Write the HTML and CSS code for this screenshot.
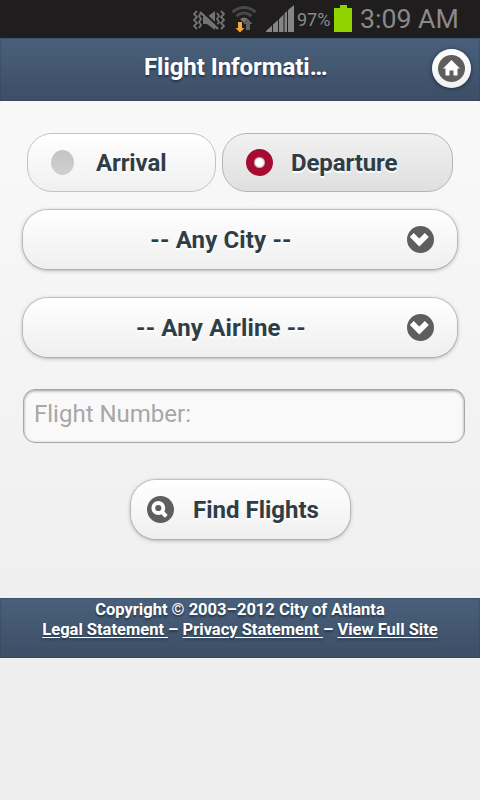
FILE: index.html
```html
<!DOCTYPE html>
<html lang="en">
<head>
<meta charset="utf-8">
<title>Flight Information</title>
<link rel="stylesheet" href="styles.css">
</head>
<body>
<div class="status">
  <svg class="mute" width="32" height="24" viewBox="0 0 32 24" fill="none" stroke="#737373" stroke-width="1.8">
    <path d="M4 2 1 5l3 3-3 3 3 3-3 3 3 3M8 4 6 7l2 3-2 3 2 3-2 3M28 2l3 3-3 3 3 3-3 3 3 3-3 3M24 4l2 3-2 3 2 3-2 3 2 3"/>
    <path d="M10 8h4l8-6v19l-8-6h-4z" fill="#737373" stroke="none"/>
    <path d="M8 1l19 18" stroke="#1f1d1e" stroke-width="2"/>
    <path d="M7 3l18 17" stroke-width="2.4"/>
  </svg>
  <svg class="wifi" width="26" height="28" viewBox="0 0 26 28" fill="none" stroke="#484848" stroke-width="3">
    <path d="M1.500 7q11.500-9 23 0M5.500 11q7.500-6 15 0"/>
    <path d="M9 14q4-3 8 0l-4 4z" fill="#737373" stroke="none"/>
    <path d="M7 17h4v6h2.500L9 27.500 4.500 23H7z" fill="#f5a33c" stroke="none"/>
    <path d="M15 25v-6h-2.500l4.500-5 4.500 5H19v6z" fill="#626262" stroke="none"/>
  </svg>
  <svg class="signal" width="28" height="27" viewBox="0 0 28 27" fill="#858585">
    <path d="M0 27v-1l6-5.500V27zM7 27v-7.500l5-4.500v12zM13 27V14l4.500-4.500V27zM18.500 27V8.500L21 6v21zM22 27V5l6-5v27z"/>
  </svg>
  <span class="percent">97%</span>
  <svg class="battery" width="18" height="27" viewBox="0 0 18 27" fill="#8fd400"><path d="M0 3h6V0h7v3h5v24H0z"/></svg>
  <span class="clock">3:09 AM</span>
</div>
<header class="bar header">
  <h1>Flight Informati…</h1>
  <a class="home" href="#" aria-label="Home">
    <svg width="27" height="27" viewBox="0 0 27 27"><circle cx="13.500" cy="13.500" r="13.500" fill="#5e5e5e"/><path d="M13.500 5 5 13.500h2.500v7h4v-5h4v5h4v-7H22z" fill="#fff"/></svg>
  </a>
</header>
<main>
  <div class="choices">
    <div class="choice arrival"><span class="dot"></span><span class="label">Arrival</span></div>
    <div class="choice departure"><span class="dot on"></span><span class="label">Departure</span></div>
  </div>
  <div class="button select city">
    <span class="label">-- Any City --</span>
    <svg width="27" height="27" viewBox="0 0 27 27"><circle cx="13.500" cy="13.500" r="13.500" fill="#5e5e5e"/><path d="M4.800 9 12.300 16.500 19.800 9" fill="none" stroke="#fff" stroke-width="5.500"/></svg>
  </div>
  <div class="button select airline">
    <span class="label">-- Any Airline --</span>
    <svg width="27" height="27" viewBox="0 0 27 27"><circle cx="13.500" cy="13.500" r="13.500" fill="#5e5e5e"/><path d="M4.800 9 12.300 16.500 19.800 9" fill="none" stroke="#fff" stroke-width="5.500"/></svg>
  </div>
  <div class="field"><span>Flight Number:</span></div>
  <div class="button find">
    <svg width="27" height="27" viewBox="0 0 27 27"><circle cx="13.500" cy="13.500" r="13.500" fill="#5e5e5e"/><circle cx="11.300" cy="12" r="5" fill="none" stroke="#fff" stroke-width="3.800"/><path d="m15 16 4.300 4.300" stroke="#fff" stroke-width="4"/></svg>
    <span class="label">Find Flights</span>
  </div>
</main>
<footer class="bar footer">
  <p class="copy">Copyright © 2003–2012 City of Atlanta</p>
  <p class="links"><a href="#">Legal Statement&nbsp;</a>– <a href="#">Privacy Statement&nbsp;</a>– <a href="#">View Full Site</a></p>
</footer>
</body>
</html>
```

FILE: styles.css
```css
* { box-sizing: border-box; }
html { background: #eee; }
body {
  margin: 0;
  height: 800px;
  overflow: hidden;
  font-family: Roboto, "Liberation Sans", sans-serif;
  font-size: 24px;
  background: linear-gradient(#f9f9f9 100px, #eee 660px);
}
svg { display: block; flex: none; }
h1, p { margin: 0; font-size: inherit; }
.status {
  display: flex;
  align-items: flex-start;
  height: 38px;
  padding: 5px 0 0 193px;
  background: #1f1d1e;
  color: #8a8a8a;
  white-space: nowrap;
}
.mute { margin-top: 4px; }
.wifi { margin-left: 6px; }
.signal { margin-left: 9px; }
.percent { width: 37px; margin-left: 3px; font-size: 18px; line-height: 30px; }
.battery { margin-left: 0; }
.clock { margin-left: 8px; font-size: 26.7px; line-height: 28px; }
.bar {
  background: linear-gradient(#49607b, #3d4e66);
  color: #fff;
  font-weight: 700;
  text-shadow: 0 2px 2px #27374a;
  box-shadow: inset 0 0 2px #2b3d54;
}
.header {
  display: flex;
  align-items: center;
  height: 63px;
  padding: 0 9px 0 144px;
}
h1 { flex: 1; line-height: 58px; padding-bottom: 5px; letter-spacing: -0.06px; white-space: nowrap; }
.home {
  display: grid;
  place-items: center;
  width: 39px;
  height: 39px;
  margin-bottom: 2px;
  border-radius: 50%;
  background: linear-gradient(#fff, #f0f0f2);
  box-shadow: 0 1px 4px #202e40;
}
main { height: 497px; padding: 32px 15px 0 23px; }
.label { color: #2f3e46; font-weight: 700; text-shadow: 0 2px 0 #fff; line-height: 28px; white-space: nowrap; }
.choices { display: flex; gap: 6px; margin-left: 4px; }
.choice {
  display: flex;
  align-items: center;
  height: 59px;
  border: 1px solid #c2c2c2;
  border-radius: 25px;
  background: linear-gradient(#fff, #f0f0f0);
}
.choice .label { letter-spacing: -0.12px; }
.arrival { width: 189px; padding-left: 23px; }
.departure { width: 231px; padding-left: 23px; border-color: #b5b5b5; background: linear-gradient(#f1f1f1, #dfdfdf); }
.dot { width: 23px; height: 25px; margin: 0 22px 1px 0; border-radius: 50%; background: linear-gradient(#c4c4c4, #d0d0d0); }
.dot.on { width: 27px; height: 27px; margin: 0 18px 0 0; border: 8px solid #a60b32; background: #fff; box-shadow: inset 0 0 2px #63051e; }
.button {
  display: flex;
  align-items: center;
  height: 59px;
  border-radius: 25px;
  background: linear-gradient(#fff, #efefef);
  box-shadow: 0 1px 4px #999, 0 0 0 1px #ccc;
}
.select { width: 434px; padding-right: 23px; }
.select .label { flex: 1; text-align: center; padding-left: 12px; letter-spacing: 0.15px; }
.city { margin-top: 18px; }
.airline { margin-top: 29px; }
.field {
  display: flex;
  height: 54px;
  margin-top: 32px;
  padding: 10px;
  border: 1px solid #a6a6a6;
  border-radius: 12px;
  background: #f9f9f9;
  box-shadow: inset 0 1px 3px #999;
  color: #a7a7a7;
  line-height: 28px;
}
.find { width: 219px; margin: 37px 0 0 108px; padding-left: 16px; }
.find .label { margin-left: 19px; }
.footer { height: 60px; font-size: 16.5px; line-height: 20px; text-align: center; padding-top: 2px; white-space: nowrap; }
.footer a { color: inherit; text-underline-offset: 2px; }
```
